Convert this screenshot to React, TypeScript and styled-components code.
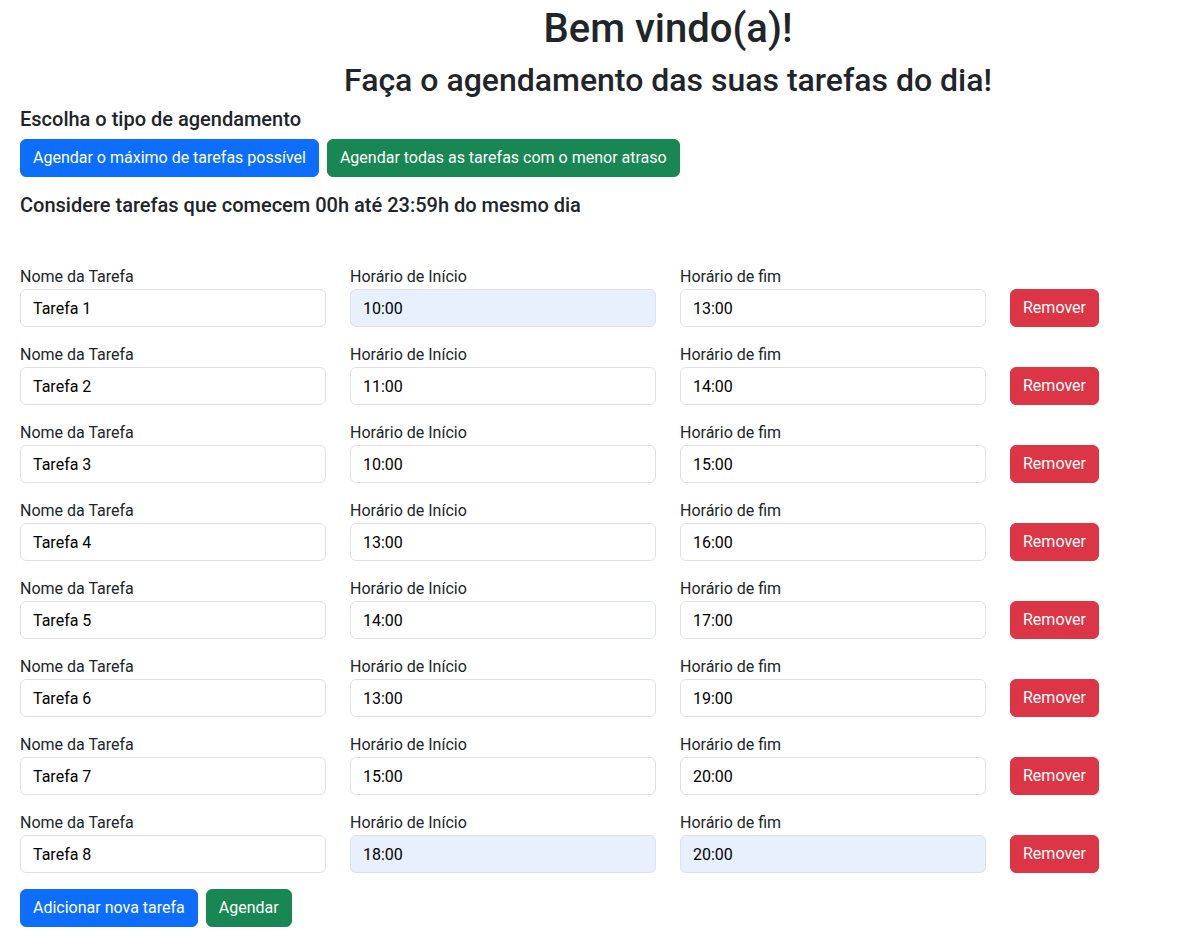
import React from "react";
import styled, { createGlobalStyle } from "styled-components";

const GlobalStyle = createGlobalStyle`
  html, body {
    margin: 0;
    padding: 0;
    background: #fff;
  }
  body {
    font-family: Roboto, "Liberation Sans", sans-serif;
    font-size: 16px;
    line-height: 1.5;
    color: #212529;
  }
  *, *::before, *::after { box-sizing: border-box; }
`;

const Page = styled.main`
  margin: 0 8px;
  padding: 5px 12px 0;
`;

/* The original headings are centred over a 1320px-wide row; the left
   padding reproduces that visual centre without overflowing the window. */
const Header = styled.header`
  padding-left: 156px;
  text-align: center;
`;

const Title = styled.h1`
  margin: 0 0 8px;
  font-size: 40px;
  font-weight: 500;
  line-height: 1.2;
`;

const Subtitle = styled.h2`
  margin: 0 0 8px;
  font-size: 32px;
  font-weight: 500;
  line-height: 1.2;
`;

const SectionHeading = styled.h5<{ $top?: number; $bottom?: number }>`
  margin: ${(p) => p.$top ?? 0}px 0 ${(p) => p.$bottom ?? 8}px;
  font-size: 20px;
  font-weight: 500;
  line-height: 1.2;
`;

const ButtonBar = styled.div`
  display: flex;
  gap: 8px;
`;

const Button = styled.button<{ $variant: "primary" | "success" | "danger" }>`
  font-family: inherit;
  font-size: 16px;
  line-height: 24px;
  padding: 6px 12px;
  border-radius: 6px;
  cursor: pointer;
  color: #fff;
  border: 1px solid
    ${(p) =>
      p.$variant === "primary" ? "#0d6efd" : p.$variant === "success" ? "#198754" : "#dc3545"};
  background: ${(p) =>
    p.$variant === "primary" ? "#0d6efd" : p.$variant === "success" ? "#198754" : "#dc3545"};
`;

const TaskList = styled.div`
  margin-top: 48px;
  display: flex;
  flex-direction: column;
  gap: 16px;
`;

const TaskRow = styled.div`
  display: grid;
  grid-template-columns: 306px 306px 306px auto;
  column-gap: 24px;
  align-items: end;
`;

const Field = styled.div`
  display: flex;
  flex-direction: column;
`;

const Label = styled.label`
  font-size: 16px;
  line-height: 24px;
`;

const Input = styled.input<{ $autofilled?: boolean }>`
  display: block;
  width: 100%;
  height: 38px;
  padding: 6px 12px;
  font-family: inherit;
  font-size: 16px;
  line-height: 24px;
  color: #000;
  background: ${(p) => (p.$autofilled ? "#e8f0fe" : "#fff")};
  border: 1px solid #dee2e6;
  border-radius: 6px;
  outline: none;
`;

const RemoveCell = styled.div`
  display: flex;
`;

const Footer = styled.div`
  margin-top: 16px;
  display: flex;
  gap: 8px;
`;

type Task = {
  name: string;
  start: string;
  end: string;
  startFilled?: boolean;
  endFilled?: boolean;
};

const tasks: Task[] = [
  { name: "Tarefa 1", start: "10:00", end: "13:00", startFilled: true },
  { name: "Tarefa 2", start: "11:00", end: "14:00" },
  { name: "Tarefa 3", start: "10:00", end: "15:00" },
  { name: "Tarefa 4", start: "13:00", end: "16:00" },
  { name: "Tarefa 5", start: "14:00", end: "17:00" },
  { name: "Tarefa 6", start: "13:00", end: "19:00" },
  { name: "Tarefa 7", start: "15:00", end: "20:00" },
  { name: "Tarefa 8", start: "18:00", end: "20:00", startFilled: true, endFilled: true },
];

export default function App() {
  return (
    <>
      <GlobalStyle />
      <Page>
        <Header>
          <Title>Bem vindo(a)!</Title>
          <Subtitle>Faça o agendamento das suas tarefas do dia!</Subtitle>
        </Header>
        <SectionHeading>Escolha o tipo de agendamento</SectionHeading>
        <ButtonBar>
          <Button $variant="primary">Agendar o máximo de tarefas possível</Button>
          <Button $variant="success">Agendar todas as tarefas com o menor atraso</Button>
        </ButtonBar>
        <SectionHeading $top={16}>Considere tarefas que comecem 00h até 23:59h do mesmo dia</SectionHeading>
        <TaskList>
          {tasks.map((t, i) => (
            <TaskRow key={i}>
              <Field>
                <Label>Nome da Tarefa</Label>
                <Input defaultValue={t.name} />
              </Field>
              <Field>
                <Label>Horário de Início</Label>
                <Input defaultValue={t.start} $autofilled={t.startFilled} />
              </Field>
              <Field>
                <Label>Horário de fim</Label>
                <Input defaultValue={t.end} $autofilled={t.endFilled} />
              </Field>
              <RemoveCell>
                <Button $variant="danger">Remover</Button>
              </RemoveCell>
            </TaskRow>
          ))}
        </TaskList>
        <Footer>
          <Button $variant="primary">Adicionar nova tarefa</Button>
          <Button $variant="success">Agendar</Button>
        </Footer>
      </Page>
    </>
  );
}
